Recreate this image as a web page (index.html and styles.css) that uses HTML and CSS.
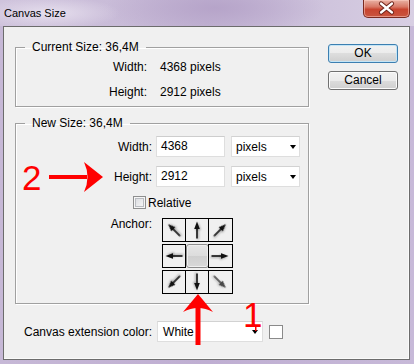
FILE: index.html
```html
<!DOCTYPE html>
<html lang="en">
<head>
    <meta charset="UTF-8">
    <title>Canvas Size</title>
    <link rel="stylesheet" href="styles.css">
</head>
<body>
    <div class="window">
        <div class="titlebar">
            <span class="title">Canvas Size</span>
            <div class="close">
                <svg width="47" height="18" viewBox="0 0 47 18">
                    <path d="M18 4.5 L29 13.5 M29 4.5 L18 13.5" stroke="#6b2117" stroke-width="4.2" stroke-linecap="round"/>
                    <path d="M18 4.5 L29 13.5 M29 4.5 L18 13.5" stroke="#fff" stroke-width="2.3" stroke-linecap="round"/>
                </svg>
            </div>
        </div>

        <div class="client">
            <div class="main">
                <fieldset class="group current">
                    <legend>Current Size: 36,4M</legend>
                    <div class="info-row"><span class="label">Width:</span><span>4368 pixels</span></div>
                    <div class="info-row"><span class="label">Height:</span><span>2912 pixels</span></div>
                </fieldset>

                <fieldset class="group new">
                    <legend>New Size: 36,4M</legend>
                    <div class="field-row">
                        <span class="label">Width:</span>
                        <div class="input">4368</div>
                        <div class="select unit">pixels<span class="caret"></span></div>
                    </div>
                    <div class="field-row">
                        <span class="label">Height:</span>
                        <div class="input">2912</div>
                        <div class="select unit">pixels<span class="caret"></span></div>
                    </div>
                    <div class="check-row"><span class="checkbox"></span>Relative</div>
                    <div class="anchor-row">
                        <span class="label">Anchor:</span>
                        <div class="anchor">
                            <div class="cell"><svg class="arr r-nw" viewBox="0 0 22 22"><use href="#arrow"/></svg></div>
                            <div class="cell"><svg class="arr" viewBox="0 0 22 22"><use href="#arrow"/></svg></div>
                            <div class="cell"><svg class="arr r-ne" viewBox="0 0 22 22"><use href="#arrow"/></svg></div>
                            <div class="cell"><svg class="arr r-w" viewBox="0 0 22 22"><use href="#arrow"/></svg></div>
                            <div class="cell center"></div>
                            <div class="cell"><svg class="arr r-e" viewBox="0 0 22 22"><use href="#arrow"/></svg></div>
                            <div class="cell"><svg class="arr r-sw" viewBox="0 0 22 22"><use href="#arrow"/></svg></div>
                            <div class="cell"><svg class="arr r-s" viewBox="0 0 22 22"><use href="#arrow"/></svg></div>
                            <div class="cell"><svg class="arr r-se faint" viewBox="0 0 22 22"><use href="#arrow"/></svg></div>
                        </div>
                    </div>
                </fieldset>

                <div class="ext-row">
                    <span>Canvas extension color:</span>
                    <div class="select ext">White<span class="caret"></span></div>
                    <span class="swatch"></span>
                </div>
            </div>

            <div class="buttons">
                <div class="btn default">OK</div>
                <div class="btn">Cancel</div>
            </div>
        </div>

        <!-- red notes drawn over the dialog -->
        <svg class="marks" width="414" height="364" viewBox="0 0 414 364">
            <rect x="49" y="175" width="38" height="4" fill="#f00"/>
            <path d="M103 177 L84 162 Q91 177 84 192 Z" fill="#f00"/>
            <rect x="195.5" y="303" width="5" height="42" fill="#f00"/>
            <path d="M198 294 L213 312 Q198 304 183 312 Z" fill="#f00"/>
            <rect x="255" y="325" width="1.5" height="6" fill="#f00"/>
        </svg>
        <span class="num num-2">2</span>
        <span class="num num-1">1</span>
    </div>

    <svg width="0" height="0" style="position:absolute">
        <defs>
            <g id="arrow">
                <path d="M11 2.5 L13.8 10 L8.2 10 Z" fill="#111"/>
                <rect x="10.2" y="9" width="1.6" height="10.5" fill="#111"/>
            </g>
        </defs>
    </svg>
</body>
</html>
```

FILE: styles.css
```css
*{
    box-sizing: border-box;
}
body{
    margin: 0;
    font: 12px "Liberation Sans", Arial, sans-serif;
    color: #000;
}
.window{
    position: relative;
    width: 414px;
    height: 364px;
    background: linear-gradient(90deg, #c6b8d6, #bfaed2 50%, #c7b9d8);
    overflow: hidden;
}
.titlebar{
    height: 26px;
    display: flex;
    justify-content: space-between;
    align-items: flex-start;
    padding: 0 4px 0 4px;
    background:
        radial-gradient(ellipse 70px 16px at 50px 13px, rgba(236,230,242,0.8), rgba(236,230,242,0)),
        radial-gradient(ellipse 110px 30px at 215px 8px, #b6a4c9, rgba(182,164,201,0)),
        linear-gradient(90deg, #cfc3dc, #c4b6d5 50%, #d8cfe3);
}
.title{
    font-size: 11px;
    line-height: 26px;
}
.close{
    width: 47px;
    height: 18px;
    border: 1px solid #7a2a20;
    border-top: none;
    border-radius: 0 0 5px 5px;
    background: linear-gradient(#e9b2a4, #d87866 40%, #c8442f 55%, #c9553f);
    box-shadow: inset 0 0 0 1px rgba(255,210,200,0.5);
}
.close svg{
    display: block;
    margin: -1px 0 0 -1px;
}
.client{
    margin: 0 4px 0 3px;
    height: 334px;
    border: 1px solid #6c6c6c;
    background: #f0f0f0;
    box-shadow: inset -1px -1px 0 #fafafa;
    display: flex;
    align-items: flex-start;
    gap: 19px;
    padding: 13px 11px 0 11px;
}
.main{
    width: 294px;
}
.group{
    margin: 0;
    padding: 0;
    min-width: 0;
    border: 1px solid #a0a0a0;
    box-shadow: 1px 1px 0 #fff, inset 1px 1px 0 #fff;
}
.group legend{
    margin-left: 9px;
    padding: 0 7px;
    line-height: 14px;
}
.current{
    padding: 5px 0 6px 0;
}
.info-row{
    display: flex;
    gap: 13px;
    line-height: 16px;
}
.info-row + .info-row{
    margin-top: 9px;
}
.info-row .label{
    width: 131px;
    text-align: right;
}
.new{
    margin-top: 9px;
    padding: 6px 0 9px 0;
}
.field-row{
    display: flex;
    align-items: center;
    height: 21px;
    margin-bottom: 9px;
}
.field-row .label{
    width: 136px;
    text-align: right;
    margin-right: 4px;
}
.input{
    width: 69px;
    height: 21px;
    line-height: 19px;
    padding-left: 4px;
    background: #fff;
    border: 1px solid #dedede;
    border-top-color: #cdcdcd;
    margin-right: 6px;
}
.select{
    display: flex;
    justify-content: space-between;
    align-items: center;
    height: 21px;
    background: #fff;
    border: 1px solid #dedede;
    border-top-color: #d2d2d2;
}
.unit{
    width: 69px;
    padding: 0 3px 0 4px;
}
.caret{
    width: 0;
    height: 0;
    border-left: 3.5px solid transparent;
    border-right: 3.5px solid transparent;
    border-top: 4px solid #000;
    margin-top: 1px;
}
.check-row{
    display: flex;
    align-items: center;
    height: 13px;
    padding-left: 117px;
    margin-bottom: 9px;
}
.checkbox{
    width: 13px;
    height: 13px;
    margin-right: 2px;
    border: 1px solid #8e8f8f;
    background: linear-gradient(135deg, #d6d8dc, #fbfbfb);
    box-shadow: inset 0 0 0 1px #f6f6f6, inset 0 0 0 2px #b9bcc1;
}
.anchor-row{
    display: flex;
    align-items: flex-start;
}
.anchor-row .label{
    width: 136px;
    text-align: right;
    line-height: 12px;
    margin-right: 10px;
}
.anchor{
    display: grid;
    grid-template-columns: 24px 23px 24px;
    grid-template-rows: 24px 24px 24px;
    row-gap: 2px;
}
.cell{
    width: 24px;
    height: 24px;
    border: 1px solid #000;
    background: #f0f0f0;
}
.cell:nth-child(3n+2){
    margin-left: -1px;
    width: 25px;
}
.cell:nth-child(3n){
    margin-left: -1px;
    width: 25px;
}
.cell.center{
    border: 1px solid #8c8c8c;
    border-radius: 3px;
    margin-left: 0;
    width: 23px;
    background: linear-gradient(#e6e6e6, #dcdcdc 50%, #cfcfcf 50%, #d9d9d9);
    box-shadow: inset 0 0 0 1px #efefef;
}
.arr{
    display: block;
    width: 22px;
    height: 22px;
    filter: drop-shadow(1px 1px 0.8px rgba(0,0,0,0.35));
}
.r-nw{ transform: rotate(-45deg); }
.r-ne{ transform: rotate(45deg); }
.r-w{ transform: rotate(-90deg); }
.r-e{ transform: rotate(90deg); }
.r-sw{ transform: rotate(-135deg); }
.r-s{ transform: rotate(180deg); }
.r-se{ transform: rotate(135deg); }
.faint{ opacity: 0.75; }
.ext-row{
    display: flex;
    align-items: center;
    margin-top: 17px;
    padding-left: 9px;
}
.ext{
    width: 106px;
    margin-left: 5px;
    padding: 0 4px 0 5px;
}
.swatch{
    width: 14px;
    height: 14px;
    margin-left: 6px;
    border: 1px solid #8a8a8a;
    background: #fff;
}
.buttons{
    width: 70px;
    margin-top: 4px;
    display: flex;
    flex-direction: column;
    gap: 8px;
}
.btn{
    height: 19px;
    line-height: 17px;
    text-align: center;
    border: 1px solid #707070;
    border-radius: 3px;
    background: linear-gradient(#f2f2f2, #ebebeb 50%, #dddddd 50%, #cfcfcf);
    box-shadow: inset 0 0 0 1px #fbfbfb;
}
.btn.default{
    border-color: #3c7fb1;
    box-shadow: inset 0 0 0 1px #c4e5f6;
}
.marks{
    position: absolute;
    left: 0;
    top: 0;
    pointer-events: none;
}
.num{
    position: absolute;
    color: #f00;
    font: 35px/35px "Liberation Sans", Arial, sans-serif;
}
.num-2{
    left: 22px;
    top: 160px;
}
.num-1{
    left: 243px;
    top: 297px;
}
```
